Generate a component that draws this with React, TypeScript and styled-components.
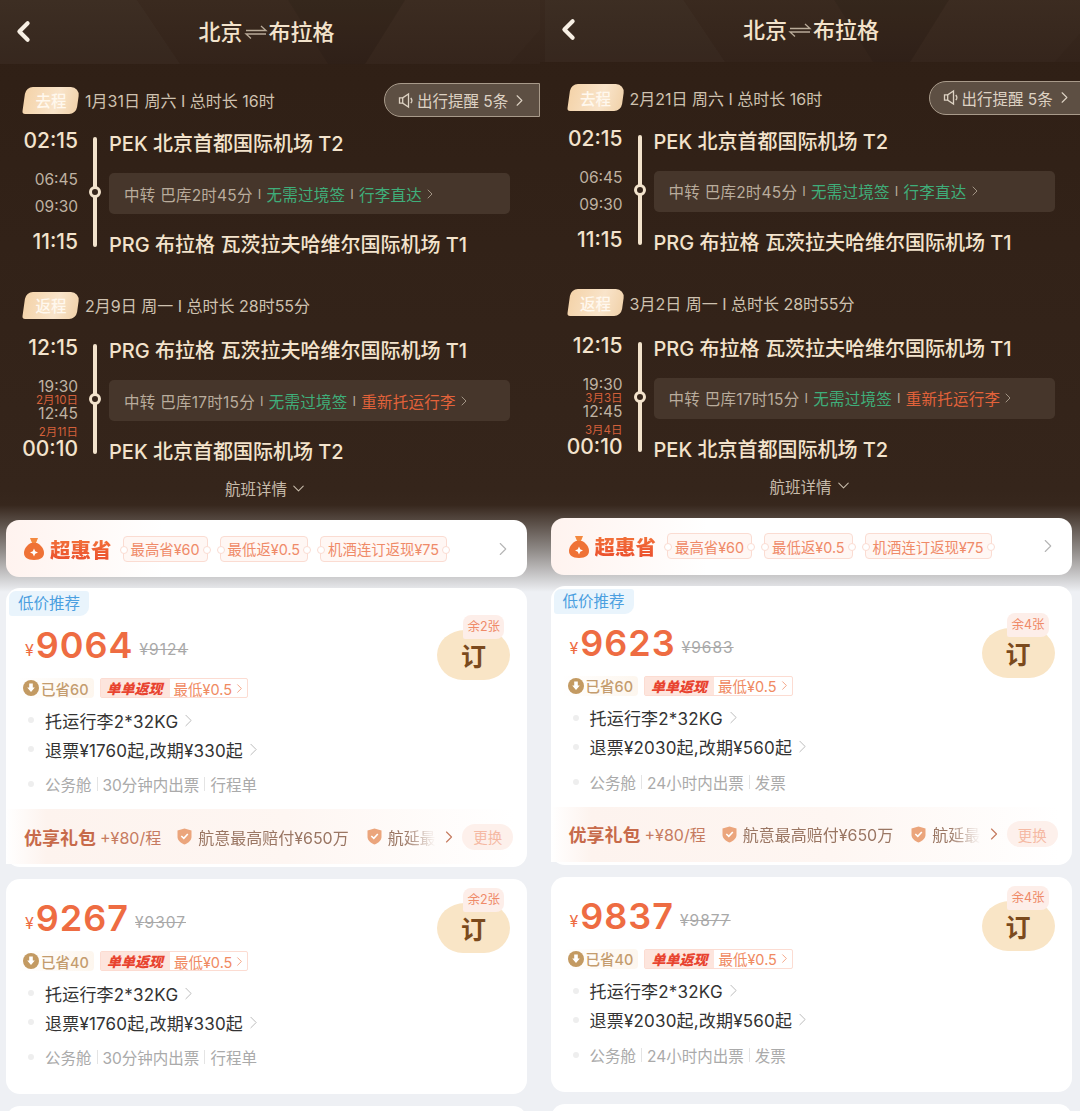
import styled, { createGlobalStyle } from "styled-components";
import { ChevronDown, ChevronLeft, ChevronRight } from "lucide-react";

const GlobalStyle = createGlobalStyle`
  html, body {
    margin: 0;
    padding: 0;
    background: #eef0f4;
    font-family: Inter, "Noto Sans CJK SC", sans-serif;
  }
  * { box-sizing: border-box; }
`;

const Page = styled.div`
  display: grid;
  grid-template-columns: 540px 540px;
  width: 1080px;
  height: 1111px;
  overflow: hidden;
`;

const Panel = styled.div`
  width: 540px;
  height: 1111px;
  overflow: hidden;
  background:
    linear-gradient(180deg, #3a2a1f 0, #33231a 100%) 0 0 / 100% 62px no-repeat,
    linear-gradient(
      180deg,
      #2f1f15 0,
      #35251b 490px,
      #37271d 505px,
      #8f8a87 550px,
      #eef0f4 592px
    );
`;

const Screen = styled.div<{ $shiftX: number; $shiftY: number }>`
  width: 540px;
  height: 1120px;
  margin-left: ${(p) => p.$shiftX}px;
  margin-top: ${(p) => p.$shiftY}px;
`;

const Header = styled.header`
  position: relative;
  display: flex;
  align-items: center;
  justify-content: center;
  width: 540px;
  height: 64px;
  padding-right: 7px;
  overflow: hidden;
  background: linear-gradient(180deg, #3a2a1f 0, #33231a 100%);
  color: #f3e3cc;
`;

const HeaderArt = styled.svg`
  position: absolute;
  left: 0;
  top: 0;
  width: 540px;
  height: 64px;
`;

const BackButton = styled.div`
  position: absolute;
  left: 7px;
  top: 15px;
  display: flex;
  color: #f7efe4;
`;

const Title = styled.h1`
  position: relative;
  display: flex;
  align-items: center;
  gap: 1px;
  margin: 0;
  font-size: 22px;
  font-weight: 500;
  line-height: 30px;
`;

const Section = styled.section<{ $top: number }>`
  padding-top: ${(p) => p.$top}px;
`;

const SectionHead = styled.div`
  display: flex;
  align-items: center;
  height: 34px;
  padding-left: 24px;
`;

const LegTag = styled.span`
  position: relative;
  display: flex;
  align-items: center;
  justify-content: center;
  width: 54px;
  height: 27px;
  margin-right: 7px;
  color: #fff8ee;
  font-size: 15.5px;
  font-weight: 500;

  &::before {
    content: "";
    position: absolute;
    inset: 0;
    z-index: 0;
    border-radius: 7px 9px 7px 3px;
    background: linear-gradient(100deg, #f4d3a9, #f9e4ca 60%, #f1d2aa);
    transform: skewX(-8deg);
  }
`;

const LegTagText = styled.span`
  position: relative;
`;

const LegDate = styled.span`
  color: #cfc2b0;
  font-size: 16px;
  white-space: nowrap;
`;

const Notice = styled.div`
  display: flex;
  align-items: center;
  flex: none;
  width: 156px;
  height: 34px;
  margin-left: auto;
  padding-left: 13px;
  border: 1px solid #a89a8a;
  border-radius: 17px 0 0 17px;
  background: #5d4f43;
  color: #ddd2c3;
  font-size: 15.5px;
  white-space: nowrap;
`;

const NoticeText = styled.span`
  margin: 0 2px 0 2px;
`;

const Flight = styled.div<{ $gap: number }>`
  display: grid;
  grid-template-columns: 78px 31px 401px;
  margin-top: ${(p) => p.$gap}px;
`;

const Times = styled.div`
  display: flex;
  flex-direction: column;
  align-items: flex-end;
`;

const MainTime = styled.div<{ $gap?: number }>`
  height: 26px;
  margin-top: ${(p) => p.$gap ?? 0}px;
  color: #f3e3cc;
  font-size: 21px;
  font-weight: 500;
  line-height: 26px;
`;

const StopTime = styled.div<{ $gap?: number }>`
  height: 16px;
  margin-top: ${(p) => p.$gap ?? 0}px;
  color: #bfb2a2;
  font-size: 15.5px;
  line-height: 16px;
`;

const DayNote = styled.div<{ $gap?: number }>`
  height: 11px;
  margin-top: ${(p) => p.$gap ?? 0}px;
  color: #d3603a;
  font-size: 11.5px;
  line-height: 11px;
`;

const Rail = styled.div`
  position: relative;
  width: 4px;
  height: 110px;
  margin: 9px 0 0 15px;
  border-radius: 2px;
  background: #f3e3cc;
`;

const RailDot = styled.span`
  position: absolute;
  left: -4px;
  top: 49px;
  width: 12px;
  height: 12px;
  border: 3px solid #f3e3cc;
  border-radius: 50%;
  background: #35251b;
`;

const Stops = styled.div`
  display: flex;
  flex-direction: column;
  padding-top: 4px;
`;

const Airport = styled.div`
  height: 24px;
  color: #f3e3cc;
  font-size: 20px;
  font-weight: 500;
  line-height: 24px;
  white-space: nowrap;
`;

const Transfer = styled.div`
  display: flex;
  align-items: center;
  height: 41px;
  margin: 17px 0 19px;
  padding-left: 15px;
  border-radius: 5px;
  background: #46362b;
  color: #b9ac9c;
  font-size: 15.5px;
  letter-spacing: 0.25px;
  white-space: nowrap;
`;

const Divider = styled.span`
  margin: 0 5px;
  font-size: 13px;
`;

const Note = styled.span<{ $tone: "green" | "orange" }>`
  color: ${(p) => (p.$tone === "green" ? "#3fae7a" : "#e2623a")};
`;

const DetailLink = styled.div`
  display: flex;
  align-items: center;
  justify-content: center;
  gap: 2px;
  width: 533px;
  height: 24px;
  margin-top: 12px;
  color: #c8bcab;
  font-size: 15.5px;
`;

const Promo = styled.div`
  display: flex;
  align-items: center;
  width: 521px;
  height: 57px;
  margin: 20px 0 -1px 6px;
  padding: 0 13px 0 18px;
  border-radius: 13px;
  background: linear-gradient(90deg, #fff3ef, #fff 30%);
`;

const PromoName = styled.span`
  margin: 0 11px 0 6px;
  background: linear-gradient(180deg, #f47a3c, #ea4a2c);
  -webkit-background-clip: text;
  background-clip: text;
  color: transparent;
  font-size: 20.5px;
  font-weight: 900;
  white-space: nowrap;
`;

const Ticket = styled.span`
  position: relative;
  display: flex;
  align-items: center;
  height: 26px;
  margin-right: 12px;
  padding: 0 7px;
  border: 1px solid #fbdcd2;
  border-radius: 4px;
  background: #fff7f4;
  color: #ef8a68;
  font-size: 14.4px;
  white-space: nowrap;

  &::before,
  &::after {
    content: "";
    position: absolute;
    top: 9px;
    width: 6px;
    height: 6px;
    border: 1px solid #fbdcd2;
    border-radius: 50%;
    background: #fff;
  }
  &::before { left: -4px; }
  &::after { right: -4px; }
`;

const PromoArrow = styled.span`
  display: flex;
  margin-left: auto;
  color: #b5b5b5;
`;

const Card = styled.article<{ $tagged?: boolean; $extras?: boolean }>`
  position: relative;
  width: 521px;
  margin: 12px 0 0 6px;
  padding: ${(p) => (p.$tagged ? 37 : 19)}px 0 ${(p) => (p.$extras ? 3 : 25)}px;
  border-radius: 14px;
  background: #fff;
`;

const EmptyCard = styled.div`
  width: 521px;
  height: 40px;
  margin: 12px 0 0 6px;
  border-radius: 14px;
  background: #fff;
`;

const CornerTag = styled.span`
  position: absolute;
  left: 3px;
  top: 3px;
  padding: 0 9px;
  border-radius: 7px 3px 9px 3px;
  background: #e9f4fc;
  color: #4b9fe0;
  font-size: 15.5px;
  line-height: 25px;
`;

const PriceRow = styled.div`
  display: flex;
  align-items: flex-end;
  height: 40px;
  padding-left: 19px;
  color: #ee6c42;
`;

const Yen = styled.span`
  margin-right: 2px;
  font-size: 16px;
  line-height: 29px;
`;

const Price = styled.span`
  font-size: 36px;
  font-weight: 600;
  letter-spacing: 1px;
  line-height: 40px;
`;

const OldPrice = styled.span`
  margin-left: 6px;
  color: #a9a9a9;
  font-size: 15.5px;
  letter-spacing: 1px;
  line-height: 31px;
  text-decoration: line-through;
`;

const BookWrap = styled.div<{ $tagged?: boolean }>`
  position: absolute;
  right: 17px;
  top: ${(p) => (p.$tagged ? 42 : 24)}px;
`;

const BookButton = styled.div`
  display: flex;
  align-items: center;
  justify-content: center;
  width: 73px;
  height: 50px;
  border-radius: 28px 28px 26px 26px / 25px;
  background: #f9e5c6;
  color: #7b4a1d;
  font-size: 25px;
  font-weight: 700;
`;

const SeatBadge = styled.span`
  position: absolute;
  right: 6px;
  top: -15px;
  padding: 0 4px;
  border-radius: 8px 8px 8px 2px;
  background: #fdeee9;
  color: #ef8a68;
  font-size: 12.5px;
  line-height: 24px;
  white-space: nowrap;
`;

const PerkRow = styled.div`
  display: flex;
  align-items: center;
  height: 20px;
  margin-top: 13px;
  padding-left: 11px;
`;

const Saved = styled.span`
  display: flex;
  align-items: center;
  gap: 2px;
  height: 20px;
  padding: 0 5px 0 6px;
  border-radius: 4px;
  background: linear-gradient(90deg, #fff, #fdf6ee);
  color: #c49c6e;
  font-size: 14.5px;
  font-weight: 500;
`;

const Cashback = styled.span`
  display: flex;
  align-items: center;
  height: 20px;
  margin-left: 6px;
  border: 1px solid #fcdcd2;
  border-radius: 2px;
  color: #f08a62;
  font-size: 14.5px;
`;

const CashbackName = styled.span`
  display: flex;
  align-items: center;
  height: 18px;
  margin-right: 4px;
  padding: 0 7px 0 6px;
  background: #fde5dd;
  color: #e8432f;
  font-size: 14px;
  font-style: italic;
  font-weight: 900;
`;

const Rule = styled.div<{ $gap: number; $muted?: boolean }>`
  position: relative;
  display: flex;
  align-items: center;
  height: 24px;
  margin-top: ${(p) => p.$gap}px;
  padding-left: 39px;
  color: ${(p) => (p.$muted ? "#aaaaaa" : "#333333")};
  font-size: ${(p) => (p.$muted ? 15.5 : 17)}px;
  letter-spacing: ${(p) => (p.$muted ? 0 : 0.2)}px;
  white-space: nowrap;

  &::before {
    content: "";
    position: absolute;
    left: 22px;
    top: 9px;
    width: 6px;
    height: 6px;
    border-radius: 50%;
    background: #eeeeee;
  }
`;

const RuleArrow = styled.span`
  display: flex;
  color: #b9b9b9;
`;

const RuleBar = styled.span`
  width: 1px;
  height: 14px;
  margin: 0 5px;
  background: #e4e4e4;
`;

const Bundle = styled.div`
  display: flex;
  align-items: center;
  height: 55px;
  margin: 13px 13px 0 0;
  padding-left: 18px;
  background: linear-gradient(90deg, #fff 0, #fdf3ee 8%, #fef6f2 55%, #fff);
`;

const BundleName = styled.span`
  color: #c76a4a;
  font-size: 18px;
  font-weight: 700;
  white-space: nowrap;
`;

const BundlePrice = styled.span`
  margin-left: 4px;
  color: #c67b60;
  font-size: 16px;
  white-space: nowrap;
`;

const BundleScroll = styled.div`
  display: flex;
  align-items: center;
  flex: none;
  width: 264px;
  margin-left: 16px;
  overflow: hidden;
  mask-image: linear-gradient(90deg, #000 86%, transparent 98%);
`;

const BundleItem = styled.span`
  display: flex;
  align-items: center;
  flex: none;
  gap: 6px;
  margin-right: 18px;
  color: #9a7663;
  font-size: 16px;
  white-space: nowrap;
`;

const BundleArrow = styled.span`
  display: flex;
  margin-left: -2px;
  color: #c67b60;
`;

const SwapButton = styled.span`
  display: flex;
  align-items: center;
  justify-content: center;
  flex: none;
  width: 51px;
  height: 26px;
  margin-left: 3px;
  border-radius: 13px;
  background: #fdf0eb;
  color: #f5b9a3;
  font-size: 14.5px;
`;

const RouteArrows = () => (
  <svg width="24" height="16" viewBox="0 0 24 16" fill="none" stroke="#b9ab99" strokeWidth="1.3">
    <path d="M2 6.500h20L17 2" />
    <path d="M22 10H2l5 4.500" />
  </svg>
);

const Speaker = () => (
  <svg width="17" height="17" viewBox="0 0 17 17" fill="none" stroke="#ddd2c3" strokeWidth="1.3">
    <path d="M1.500 5.800h3.200L10.500 2v13L4.700 11.200H1.500z" />
    <path d="M4.700 5.800v5.400" />
    <path d="M12.800 5.800c1.200 1.500 1.200 3.900 0 5.400" />
  </svg>
);

const Shield = () => (
  <svg width="15" height="17" viewBox="0 0 15 17">
    <path d="M7.500 .5 14.500 2.500v6.500c0 3.500-3.500 6-7 7.500-3.500-1.500-7-4-7-7.500V2.500z" fill="#eba57c" />
    <path d="M4.300 8 6.800 10.300 10.800 6" fill="none" stroke="#fff" strokeWidth="1.600" />
  </svg>
);

const MoneyBag = () => (
  <svg width="20" height="23" viewBox="0 0 20 23">
    <path d="M6 1h8l-2 5H8z" fill="#f4893f" />
    <path d="M7 6h6c4 2 7 6 7 10 0 4-3 7-10 7S0 20 0 16c0-4 3-8 7-10z" fill="#ef7236" />
    <path d="M10 11.500l1.200 2.800 2.800 1.200-2.800 1.200-1.200 2.800-1.200-2.800-2.800-1.200 2.800-1.200z" fill="#fff" />
  </svg>
);

const SavedCoin = () => (
  <svg width="16" height="16" viewBox="0 0 16 16">
    <circle cx="8" cy="8" r="8" fill="#c39a62" />
    <path d="M6.200 3.500h3.600v4h2L8 12 4.200 7.500h2z" fill="#fff" />
  </svg>
);

type FlightData = {
  depart: string;
  stopIn: string;
  stopInDay?: string;
  stopOut: string;
  arriveDay?: string;
  arrive: string;
  from: string;
  to: string;
  layover: string;
  note: string;
  noteTone: "green" | "orange";
};

const FlightBlock = ({ flight, gap }: { flight: FlightData; gap: number }) => (
  <Flight $gap={gap}>
    <Times>
      <MainTime>{flight.depart}</MainTime>
      <StopTime $gap={18}>{flight.stopIn}</StopTime>
      {flight.stopInDay ? (
        <>
          <DayNote>{flight.stopInDay}</DayNote>
          <StopTime>{flight.stopOut}</StopTime>
          <DayNote $gap={5}>{flight.arriveDay}</DayNote>
          <MainTime $gap={-2}>{flight.arrive}</MainTime>
        </>
      ) : (
        <>
          <StopTime $gap={11}>{flight.stopOut}</StopTime>
          <MainTime $gap={14}>{flight.arrive}</MainTime>
        </>
      )}
    </Times>
    <div>
      <Rail>
        <RailDot />
      </Rail>
    </div>
    <Stops>
      <Airport>{flight.from}</Airport>
      <Transfer>
        中转 {flight.layover}
        <Divider>I</Divider>
        <Note $tone="green">无需过境签</Note>
        <Divider>I</Divider>
        <Note $tone={flight.noteTone}>{flight.note}</Note>
        <ChevronRight size={16} strokeWidth={1.2} />
      </Transfer>
      <Airport>{flight.to}</Airport>
    </Stops>
  </Flight>
);

type OfferData = {
  price: string;
  oldPrice: string;
  saved: string;
  seats: string;
  refund: string;
  issue: string;
  receipt: string;
  tagged?: boolean;
};

const OfferCard = ({ offer }: { offer: OfferData }) => (
  <Card $tagged={offer.tagged} $extras={offer.tagged}>
    {offer.tagged && <CornerTag>低价推荐</CornerTag>}
    <BookWrap $tagged={offer.tagged}>
      <SeatBadge>{offer.seats}</SeatBadge>
      <BookButton>订</BookButton>
    </BookWrap>
    <PriceRow>
      <Yen>¥</Yen>
      <Price>{offer.price}</Price>
      <OldPrice>¥{offer.oldPrice}</OldPrice>
    </PriceRow>
    <PerkRow>
      <Saved>
        <SavedCoin />
        已省{offer.saved}
      </Saved>
      <Cashback>
        <CashbackName>单单返现</CashbackName>
        最低¥0.5
        <ChevronRight size={15} strokeWidth={1.2} />
      </Cashback>
    </PerkRow>
    <Rule $gap={10}>
      托运行李2*32KG
      <RuleArrow>
        <ChevronRight size={21} strokeWidth={1.1} />
      </RuleArrow>
    </Rule>
    <Rule $gap={5}>
      {offer.refund}
      <RuleArrow>
        <ChevronRight size={21} strokeWidth={1.1} />
      </RuleArrow>
    </Rule>
    <Rule $gap={11} $muted>
      公务舱
      <RuleBar />
      {offer.issue}
      <RuleBar />
      {offer.receipt}
    </Rule>
    {offer.tagged && (
      <Bundle>
        <BundleName>优享礼包</BundleName>
        <BundlePrice>+¥80/程</BundlePrice>
        <BundleScroll>
          <BundleItem>
            <Shield />
            航意最高赔付¥650万
          </BundleItem>
          <BundleItem>
            <Shield />
            航延最高赔付¥300
          </BundleItem>
        </BundleScroll>
        <BundleArrow>
          <ChevronRight size={20} strokeWidth={1.4} />
        </BundleArrow>
        <SwapButton>更换</SwapButton>
      </Bundle>
    )}
  </Card>
);

type TripData = {
  shiftX: number;
  shiftY: number;
  outDate: string;
  backDate: string;
  stopInDay: string;
  arriveDay: string;
  offers: OfferData[];
};

const trips: TripData[] = [
  {
    shiftX: 0,
    shiftY: 0,
    outDate: "1月31日 周六 I 总时长 16时",
    backDate: "2月9日 周一 I 总时长 28时55分",
    stopInDay: "2月10日",
    arriveDay: "2月11日",
    offers: [
      {
        price: "9064",
        oldPrice: "9124",
        saved: "60",
        seats: "余2张",
        refund: "退票¥1760起,改期¥330起",
        issue: "30分钟内出票",
        receipt: "行程单",
        tagged: true,
      },
      {
        price: "9267",
        oldPrice: "9307",
        saved: "40",
        seats: "余2张",
        refund: "退票¥1760起,改期¥330起",
        issue: "30分钟内出票",
        receipt: "行程单",
      },
    ],
  },
  {
    shiftX: 4.5,
    shiftY: -2.5,
    outDate: "2月21日 周六 I 总时长 16时",
    backDate: "3月2日 周一 I 总时长 28时55分",
    stopInDay: "3月3日",
    arriveDay: "3月4日",
    offers: [
      {
        price: "9623",
        oldPrice: "9683",
        saved: "60",
        seats: "余4张",
        refund: "退票¥2030起,改期¥560起",
        issue: "24小时内出票",
        receipt: "发票",
        tagged: true,
      },
      {
        price: "9837",
        oldPrice: "9877",
        saved: "40",
        seats: "余4张",
        refund: "退票¥2030起,改期¥560起",
        issue: "24小时内出票",
        receipt: "发票",
      },
    ],
  },
];

const PEK = "PEK 北京首都国际机场 T2";
const PRG = "PRG 布拉格 瓦茨拉夫哈维尔国际机场 T1";

const TripScreen = ({ trip }: { trip: TripData }) => (
  <Panel>
    <Screen $shiftX={trip.shiftX} $shiftY={trip.shiftY}>
      <Header>
        <HeaderArt viewBox="0 0 540 64">
          <path d="M0 0h137l43 64H0z" fill="#fff" opacity="0.02" />
          <path d="M288 0h117l-40 64h-37z" fill="#000" opacity="0.07" />
          <path d="M405 0h135v30l-30 34H365z" fill="#fff" opacity="0.012" />
        </HeaderArt>
        <BackButton>
          <ChevronLeft size={33} strokeWidth={3} />
        </BackButton>
        <Title>
          北京
          <RouteArrows />
          布拉格
        </Title>
      </Header>
      <Section $top={19}>
        <SectionHead>
          <LegTag>
            <LegTagText>去程</LegTagText>
          </LegTag>
          <LegDate>{trip.outDate}</LegDate>
          <Notice>
            <Speaker />
            <NoticeText>出行提醒 5条</NoticeText>
            <ChevronRight size={19} strokeWidth={1.4} />
          </Notice>
        </SectionHead>
        <FlightBlock
          gap={11}
          flight={{
            depart: "02:15",
            stopIn: "06:45",
            stopOut: "09:30",
            arrive: "11:15",
            from: PEK,
            to: PRG,
            layover: "巴库2时45分",
            note: "行李直达",
            noteTone: "green",
          }}
        />
      </Section>
      <Section $top={31}>
        <SectionHead>
          <LegTag>
            <LegTagText>返程</LegTagText>
          </LegTag>
          <LegDate>{trip.backDate}</LegDate>
        </SectionHead>
        <FlightBlock
          gap={13}
          flight={{
            depart: "12:15",
            stopIn: "19:30",
            stopInDay: trip.stopInDay,
            stopOut: "12:45",
            arriveDay: trip.arriveDay,
            arrive: "00:10",
            from: PRG,
            to: PEK,
            layover: "巴库17时15分",
            note: "重新托运行李",
            noteTone: "orange",
          }}
        />
      </Section>
      <DetailLink>
        航班详情
        <ChevronDown size={19} strokeWidth={1.3} />
      </DetailLink>
      <Promo>
        <MoneyBag />
        <PromoName>超惠省</PromoName>
        <Ticket>最高省¥60</Ticket>
        <Ticket>最低返¥0.5</Ticket>
        <Ticket>机酒连订返现¥75</Ticket>
        <PromoArrow>
          <ChevronRight size={22} strokeWidth={1.2} />
        </PromoArrow>
      </Promo>
      {trip.offers.map((offer) => (
        <OfferCard key={offer.price} offer={offer} />
      ))}
      <EmptyCard />
    </Screen>
  </Panel>
);

const App = () => (
  <>
    <GlobalStyle />
    <Page>
      {trips.map((trip) => (
        <TripScreen key={trip.outDate} trip={trip} />
      ))}
    </Page>
  </>
);

export default App;
